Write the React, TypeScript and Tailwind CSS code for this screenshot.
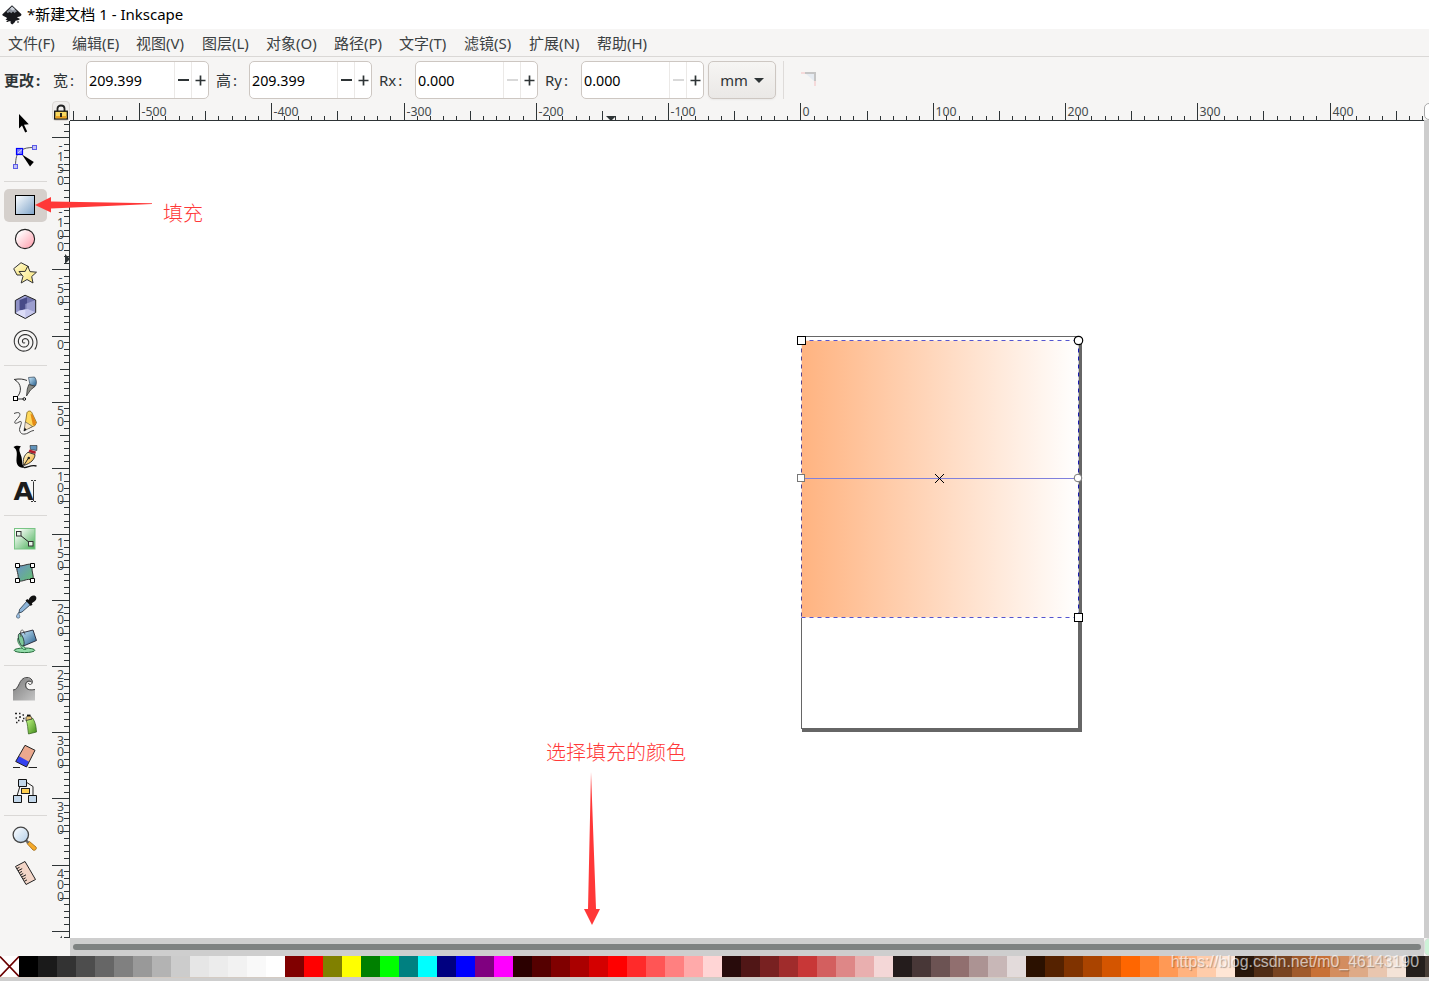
import type { ReactNode } from "react";
import clsx from "clsx";

const menus = [
  { label: "文件(F)", width: "w-16" },
  { label: "编辑(E)", width: "w-16" },
  { label: "视图(V)", width: "w-[66px]" },
  { label: "图层(L)", width: "w-16" },
  { label: "对象(O)", width: "w-[68px]" },
  { label: "路径(P)", width: "w-[65px]" },
  { label: "文字(T)", width: "w-[65px]" },
  { label: "滤镜(S)", width: "w-[65px]" },
  { label: "扩展(N)", width: "w-[68px]" },
  { label: "帮助(H)", width: "w-16" },
];

const palette = (
  "000000 1a1a1a 333333 4d4d4d 666666 808080 999999 b3b3b3 cccccc e6e6e6 ececec f2f2f2 f9f9f9 ffffff " +
  "800000 ff0000 808000 ffff00 008000 00ff00 008080 00ffff 000080 0000ff 800080 ff00ff " +
  "2b0000 550000 800000 aa0000 d40000 ff0000 ff2a2a ff5555 ff8080 ffaaaa ffd5d5 " +
  "280b0b 501616 782121 a02c2c c83737 d35f5f de8787 e9afaf f4d7d7 " +
  "241c1c 483737 6c5353 916f6f ac9393 c8b7b7 e3dbdb " +
  "2b1100 552200 803300 aa4400 d45500 ff6600 ff7f2a ff9955 ffb380 ffccaa ffe6d5 " +
  "28170b 502d16 784421 a05a2c c87137 d38d5f deaa87 e9c6af f4e3d7 241f1c 483e37"
).split(" ");

function spiralPath(cx: number, cy: number, radius: number, end: number) {
  const points: string[] = [];
  for (let t = 1.2; t <= end; t += 0.15) {
    const r = (radius * t) / end;
    points.push(`${(cx + r * Math.cos(t)).toFixed(2)} ${(cy + r * Math.sin(t)).toFixed(2)}`);
  }
  return `M${points.join("L")}`;
}

type Tool = { name: string; icon: ReactNode; active?: boolean };

const toolGroups: Tool[][] = [
  [
    {
      name: "select",
      icon: <path d="M11 8V22.5L14 19.5L17.2 26.5L19.2 25.4L16 18.8L20.8 18.2Z" fill="#000" />,
    },
    {
      name: "node",
      icon: (
        <>
          <path d="M7.5 26C7.5 18 9 13 12 11C16 8 20 7.5 26 7.5" fill="none" stroke="#555" />
          <path d="M14 14.5L25.8 22L22 26.5Z" fill="#000" />
          <rect x="8.5" y="8.5" width="6" height="6" fill="#7f7fff" stroke="#0000ff" strokeWidth="1.2" />
          <path d="M10 13L14 9.5" stroke="#dde" />
          <rect x="24.5" y="5.5" width="4" height="4" fill="#c3c3f5" stroke="#5b5be8" />
          <rect x="5.5" y="24.5" width="4" height="4" fill="#c3c3f5" stroke="#5b5be8" />
        </>
      ),
    },
  ],
  [
    {
      name: "rect",
      active: true,
      icon: <rect x="7.5" y="7.5" width="19" height="19" fill="url(#gBlue)" stroke="#000" />,
    },
    {
      name: "ellipse",
      icon: <circle cx="17" cy="17" r="9.6" fill="url(#gPink)" stroke="#222" strokeWidth="1.1" />,
    },
    {
      name: "star",
      icon: (
        <g stroke="#333" strokeLinejoin="round" fill="url(#gYellow)">
          <path d="M13 6.7L20.5 10.5L20 19L9 19L5.7 12.7Z" />
          <path d="M19.8 10L22 15.6L28.5 16.2L23.7 20.5L25 27L19 23.5L13.2 27L15 20.3L11 15.5L17.2 15.4Z" />
        </g>
      ),
    },
    {
      name: "box",
      icon: (
        <>
          <path d="M17 5.2L27.7 10V22.5L17.3 28.5L7.3 23.3V10.5Z" fill="#a3a5d6" />
          <path d="M17 5.2L7.3 10.5V23.3L11.5 20.5V10Z" fill="#9092c6" />
          <path d="M11.5 10L19.5 7V19L11.5 20.5Z" fill="#484b88" />
          <path d="M19.5 7L27.7 10V22.5L19.5 19Z" fill="#7476b0" />
          <path d="M7.3 23.3L11.5 20.5L19.5 19L27.7 22.5L17.3 28.5Z" fill="#dcdcf7" />
          <path d="M17.3 14L27.7 10V22.5L17.3 28.5Z" fill="#b8b9e4" fillOpacity="0.6" />
          <path d="M17 5.2L27.7 10V22.5L17.3 28.5L7.3 23.3V10.5Z" fill="none" stroke="#222" strokeLinejoin="round" />
        </>
      ),
    },
    {
      name: "spiral",
      icon: <path d={spiralPath(16.6, 17.8, 12.8, 19.5)} fill="none" stroke="#333" strokeWidth="1.1" />,
    },
  ],
  [
    {
      name: "pen",
      icon: (
        <>
          <path d="M6 7.5C12 6.5 15 7 19 8.5M7 8C13 11 15 20 8 26M10 27H15" fill="none" stroke="#333" />
          <path d="M20.5 5.5L26.5 5C28.8 8 29 11 27.5 14L22 13Z" fill="url(#gPenBlue)" stroke="#345" strokeWidth="0.7" />
          <path d="M20.8 12.5L27 14.3L22.5 18L18.5 24L19.3 17Z" fill="#8c8c85" stroke="#333" strokeWidth="0.8" />
          <rect x="5.5" y="24.5" width="4" height="4" fill="#fff" stroke="#000" />
          <circle cx="16.3" cy="27" r="1.3" fill="#fff" stroke="#000" />
        </>
      ),
    },
    {
      name: "pencil",
      icon: (
        <>
          <path
            d="M6 7.5C12 5 14 8 9.5 12.5C4.5 17.5 7 18.5 11 16C16 13.5 11.5 21 11.5 23.5C12 28.5 16 29 20 27C23 25 25 24.5 26 24.5"
            fill="none"
            stroke="#444"
          />
          <path d="M19 6.5C20.5 4.5 23 4.5 24 7L28.5 16.5L27 19.5L20.5 22.5L17.5 16Z" fill="#ffd95c" stroke="#6a5010" strokeWidth="0.7" />
          <path d="M22.5 8L24.5 8.5L28.2 16.5L26.8 19.5L24.8 19Z" fill="#e58a16" />
          <path d="M17.3 16L20 17.5L24.5 20.5L16 25Z" fill="#f6e3c4" stroke="#444" strokeWidth="0.6" />
          <path d="M16.6 21.5L18.6 23.7L15.7 25.3Z" fill="#111" />
        </>
      ),
    },
    {
      name: "calligraphy",
      icon: (
        <>
          <path d="M5.5 7C8 5 11 5.5 13 6.5C9.5 9 12.5 13 13.5 17C14.5 22 13.5 25 17 27.5C11 29 8 24.5 8.5 19C9 13.5 9.5 10 5.5 7Z" fill="#000" />
          <path d="M16 27.5C20 28 22 24.5 28.5 26" fill="none" stroke="#111" strokeWidth="1.3" />
          <path d="M22 5.5L29 5.5L28.8 10.5L22.5 9.5Z" fill="#6193bb" stroke="#222" strokeWidth="0.6" />
          <path d="M21.5 9.5L28 11.5L27.3 14L20.5 12Z" fill="#b31c2b" />
          <path d="M20 12.3L27 14.5C27 19 23 23.5 15.5 25.5C14.5 20 16 15 20 12.3Z" fill="url(#gGold)" stroke="#222" strokeWidth="0.9" />
          <path d="M16 25L20.5 18" stroke="#222" />
          <circle cx="20.8" cy="18" r="1.2" fill="#222" />
        </>
      ),
    },
    {
      name: "text",
      icon: (
        <>
          <text
            x="5.5"
            y="25.5"
            fontSize="24"
            fontWeight="900"
            fontFamily="'DejaVu Sans', sans-serif"
            textLength="20"
            lengthAdjust="spacingAndGlyphs"
            fill="#1c1c1c"
          >
            A
          </text>
          <path d="M25.5 7.5V27M23 6.5H25M26 6.5H28M23 27.5H25M26 27.5H28" stroke="#333" fill="none" />
        </>
      ),
    },
  ],
  [
    {
      name: "gradient",
      icon: (
        <>
          <rect x="6.5" y="6.5" width="20.5" height="20.5" fill="url(#gGreen)" stroke="#79c585" />
          <path d="M12 13L22 21" stroke="#222" />
          <rect x="8.5" y="9.5" width="4.5" height="4.5" fill="#e6f4e8" stroke="#333" />
          <rect x="20.5" y="19.5" width="4.5" height="4.5" fill="#e6f4e8" stroke="#333" />
        </>
      ),
    },
    {
      name: "mesh",
      icon: (
        <>
          <path d="M9.5 9C14 12 20 6 25 9C22 14 27 20 24.5 24.5C19 21 15 27 9.5 24.5C12 19 7 14 9.5 9Z" fill="url(#gMesh)" stroke="#333" />
          <path
            d="M7.5 7.5h4v4h-4zM22.5 7.5h4v4h-4zM7.5 22.5h4v4h-4zM22.5 22.5h4v4h-4z"
            fill="#fff"
            stroke="#000"
          />
        </>
      ),
    },
    {
      name: "dropper",
      icon: (
        <>
          <path d="M19 11L22.5 14.5L14 22L11 23L11.5 19.5Z" fill="#8db4d8" stroke="#234" strokeWidth="0.8" />
          <path
            d="M17.5 10.5L19.3 9L20.5 10C21.5 7 24 5 26.5 5.5C29 6.5 28.8 9.5 27 11L23.8 13.3L24.5 14.5L22.8 16Z"
            fill="#111"
          />
          <path d="M10.5 22.5C9 25 8.3 25.5 8.5 27C8.8 28.7 12 28.6 11.8 26.5C11.7 25 10.8 24.5 10.5 22.5Z" fill="#9cc1e5" stroke="#345" strokeWidth="0.6" />
        </>
      ),
    },
    {
      name: "bucket",
      icon: (
        <>
          <ellipse cx="16.5" cy="26.3" rx="10.3" ry="2.3" fill="#91dba8" stroke="#276b3c" />
          <path d="M10 14C8.5 17 11 21 15.5 25.5H18C15.5 22 14 20 13 16Z" fill="#8fdba4" stroke="#276b3c" strokeWidth="0.7" />
          <path d="M11.5 9.5L25 6L28.5 16.5L15.5 22Z" fill="url(#gPenBlue)" stroke="#223" strokeWidth="0.9" />
          <ellipse cx="13.2" cy="15.8" rx="2.4" ry="6.5" transform="rotate(-16 13.2 15.8)" fill="#7fca9a" stroke="#233" strokeWidth="0.8" />
          <path d="M13 13C11 5 15.5 3.5 17 10.5" fill="none" stroke="#444" strokeWidth="0.8" />
        </>
      ),
    },
  ],
  [
    {
      name: "tweak",
      icon: (
        <>
          <path
            d="M5 18C12 18 10 6 19 6C24 6 25.5 10 24 11C21 8.5 18.5 10.5 18.5 13C18.5 17 21 18.5 27 18V28.5H5Z"
            fill="url(#gGray)"
          />
          <path
            d="M5 18C12 18 10 5.5 19 5.5C24 5.5 25.5 10 23.5 12C22.5 13 20.5 12.5 20.5 11M23.5 10C20 7.5 17 10.5 17.5 13.5C18 17.5 21 18.5 27 17.5"
            fill="none"
            stroke="#444"
          />
        </>
      ),
    },
    {
      name: "spray",
      icon: (
        <>
          <path
            d="M7 7.5h2M11 7.5h1.5M14.5 9h1.5M7.5 12h1.5M11 11h2M15 12.5h1.5M10 14.5h1.5M14 15h1.5M8 16.5h1.5"
            stroke="#222"
            strokeWidth="1.6"
          />
          <path d="M18 14L25 12.5C26.5 15.5 28 18 28.5 26L20.5 28C19.5 23 20 18 18 14Z" fill="url(#gSpray)" stroke="#2e5c17" strokeWidth="0.7" />
          <path d="M18 11.5C19 9.5 22 9 23.5 11L24 13L18 14.5Z" fill="#e2c074" stroke="#333" strokeWidth="0.8" />
          <path d="M19 9.5H22.5" stroke="#111" strokeWidth="1.8" />
        </>
      ),
    },
    {
      name: "eraser",
      icon: (
        <>
          <path d="M17 5.3L27 10.3L18.5 27L7.7 21.5Z" fill="#eca98e" />
          <path d="M10.7 16L21 21.7L18.5 27L7.7 21.5Z" fill="#3442f0" />
          <path d="M17 5.3L27 10.3L18.5 27L7.7 21.5Z" fill="none" stroke="#222" strokeLinejoin="round" />
          <path d="M5 27.5H12M20.5 27.5H29" stroke="#222" />
        </>
      ),
    },
    {
      name: "connector",
      icon: (
        <>
          <path d="M12 12L9 22M18 8L25 12.5V22" fill="none" stroke="#222" />
          <path d="M10.5 5.5h8v7h-8zM5.5 21.5h8v7h-8zM20.5 21.5h8v7h-8z" fill="#c3d7ea" stroke="#111" />
          <rect x="13.5" y="14.5" width="8" height="5" fill="#ffce4f" stroke="#222" />
        </>
      ),
    },
  ],
  [
    {
      name: "zoom",
      icon: (
        <>
          <path d="M19 21.5L21.5 19.5L28 25C29.3 26.5 27 29.3 25 28Z" fill="#f5aa2a" stroke="#9c6510" strokeWidth="0.8" strokeLinejoin="round" />
          <path d="M17.5 18L20.5 20.8" stroke="#666" strokeWidth="2.5" />
          <circle cx="12.8" cy="12.8" r="7.7" fill="url(#gLens)" stroke="#444" strokeWidth="1.3" />
        </>
      ),
    },
    {
      name: "measure",
      icon: (
        <>
          <path d="M7.5 10.5L17 5.5L27.5 23.5L18 28.5Z" fill="#f3d5c7" stroke="#222" strokeLinejoin="round" />
          <path
            d="M8.8 12.7L11.5 11.3M10 14.8L14.2 12.6M11.2 16.9L14 15.4M12.4 19L15.2 17.5M13.7 21.1L18 18.8M15 23.2L17.6 21.8M16.3 25.3L19 23.9"
            stroke="#222"
          />
        </>
      ),
    },
  ],
];

function Gradient({ id, from, to }: { id: string; from: string; to: string }) {
  return (
    <linearGradient id={id} x1="0" y1="0" x2="1" y2="1">
      <stop offset="0.15" stopColor={from} />
      <stop offset="1" stopColor={to} />
    </linearGradient>
  );
}

function GradientDefs() {
  return (
    <svg className="absolute size-0">
      <defs>
        <Gradient id="gBlue" from="#eaf1f8" to="#7ea3c8" />
        <Gradient id="gPink" from="#ffffff" to="#ff99a8" />
        <Gradient id="gYellow" from="#fffad0" to="#f7e068" />
        <Gradient id="gPenBlue" from="#b7d9ef" to="#225a88" />
        <Gradient id="gGold" from="#fff2c0" to="#eda11f" />
        <Gradient id="gGreen" from="#f5fbf5" to="#46ae55" />
        <Gradient id="gMesh" from="#6a97bd" to="#65c06f" />
        <Gradient id="gGray" from="#888888" to="#c4c4c4" />
        <Gradient id="gSpray" from="#b4ec78" to="#3f8a18" />
        <Gradient id="gLens" from="#f3f8fd" to="#b4cfe8" />
      </defs>
    </svg>
  );
}

function TitleBar() {
  return (
    <div className="flex h-[29px] shrink-0 items-center gap-[5px] bg-white pl-0.5 text-[15px] text-black">
      <svg className="h-5 w-5" viewBox="0 0 20 20">
        <path
          d="M10 0.3L19 8.8C20.5 10.3 18 11.5 15.5 12C14 12.5 16.5 13.2 18 14C17 15.5 14.5 15 13.5 15.8C13 17 12 18.5 10.3 19.5C8.5 18.8 8 17.5 9 16.5C6.5 16.5 4.5 15.5 3.5 14C6 13.5 5 12.5 2.5 11.5C0 10.5 -0.2 9.8 1 8.8Z"
          fill="#17181c"
        />
        <path d="M10 1.5L15 6.2L12.5 8L11 6.5L9.3 8.3L7.8 7L5.7 8L4.5 6.8Z" fill="#8f959f" />
        <path d="M10 1.5L13 4.2L11 5.5L8 4Z" fill="#cdd2da" />
        <path d="M4.5 16.5H6.5M15 17H17" stroke="#222" />
      </svg>
      <span className="whitespace-pre">*新建文档 1 - Inkscape</span>
    </div>
  );
}

function SpinBox({ value, atMinimum }: { value: string; atMinimum?: boolean }) {
  return (
    <div className="flex h-[38px] w-[123px] shrink-0 overflow-hidden rounded-[5px] border border-[#cdc7c2] bg-white">
      <span className="flex flex-1 items-center pt-0.5 pl-0.5 text-[14.3px] text-black">{value}</span>
      <div className="flex w-[17px] items-center justify-center border-l border-[#ebe9e7]">
        <span className={clsx("h-[1.5px] w-[11px]", atMinimum ? "bg-[#d9d9d9]" : "bg-[#2e3436]")} />
      </div>
      <div className="flex w-[17px] items-center border-l border-[#ebe9e7] pl-[2.5px]">
        <svg className="h-[11px] w-[11px]" viewBox="0 0 11 11">
          <path d="M0.5 5.5H10.5M5.5 0.5V10.5" stroke="#2e3436" strokeWidth="1.7" />
        </svg>
      </div>
    </div>
  );
}

function ControlBar() {
  return (
    <div className="flex h-[45px] shrink-0 items-start border-t border-[#dad8d6] pt-1 pl-1 text-[15px] text-[#2e3436]">
      <span className="flex h-[38px] w-[49px] items-center gap-0.5 font-bold">更改<span>:</span></span>
      <span className="flex h-[38px] w-[33px] items-center gap-0.5">宽<span>:</span></span>
      <SpinBox value="209.399" />
      <span className="ml-[7px] flex h-[38px] w-[33px] items-center gap-0.5">高<span>:</span></span>
      <SpinBox value="209.399" />
      <span className="ml-[7px] flex h-[38px] w-9 items-center gap-0.5">Rx<span>:</span></span>
      <SpinBox value="0.000" atMinimum />
      <span className="ml-[7px] flex h-[38px] w-9 items-center gap-0.5">Ry<span>:</span></span>
      <SpinBox value="0.000" atMinimum />
      <button className="ml-1 flex h-[38px] w-[68px] items-center justify-center gap-1.5 rounded-[5px] border border-[#cdc7c2] bg-linear-to-b from-[#f6f5f3] to-[#eae8e6] pt-px text-[14.8px] shadow-xs">
        mm
        <svg className="h-[5px] w-2.5" viewBox="0 0 10 5">
          <path d="M0 0H10L5 5Z" fill="#2e3436" />
        </svg>
      </button>
      <div className="ml-[7px] h-[38px] w-px bg-[#dedbd9]" />
      <svg className="mt-[11px] ml-[17px] h-[14px] w-[15px]" viewBox="0 0 15 14">
        <path d="M5 2H13V9Z" fill="#e6ebf1" />
        <path d="M0 1H5M14 8V14" stroke="#f5dada" strokeWidth="2" />
        <path d="M4 1H14V9" fill="none" stroke="#c5c5c5" strokeWidth="2" />
      </svg>
    </div>
  );
}

function ToolBox() {
  return (
    <div className="flex w-[52px] shrink-0 flex-col pt-[5px]">
      {toolGroups.map((group, index) => (
        <div key={index}>
          {index > 0 && (
            <div className="flex h-3.5 items-center">
              <div className="ml-1 h-px w-[43px] bg-[#dad8d6]" />
            </div>
          )}
          {group.map((tool) => (
            <div key={tool.name} className="flex h-[34px] items-center">
              <div
                className={clsx(
                  "ml-1 flex h-[33px] w-[43px] items-center rounded-[5px] pl-1",
                  tool.active && "bg-[#d5d0cc]"
                )}
              >
                <svg className="h-[34px] w-[34px] shrink-0" viewBox="0 0 34 34">
                  {tool.icon}
                </svg>
              </div>
            </div>
          ))}
        </div>
      ))}
    </div>
  );
}

function range(from: number, to: number, step: number) {
  const values: number[] = [];
  for (let v = from; v <= to; v += step) values.push(v);
  return values;
}

function HorizontalRuler() {
  const toX = (v: number) => Math.floor(800.9 + v * 1.3229) - 70;

  return (
    <svg className="h-5 w-[1354px] shrink-0" viewBox="0 0 1354 20" fontSize="12.3" fill="#454a4c">
      {range(-550, 470, 10).map((v) => {
        const height = v % 100 === 0 ? 18 : v % 50 === 0 ? 10 : 5;
        return <rect key={v} x={toX(v)} y={20 - height} width="1" height={height} fill="#2e3436" />;
      })}
      {range(-500, 400, 100).map((v) => (
        <text key={v} x={toX(v) + 2.5} y="15">
          {v}
        </text>
      ))}
      <rect y="19" width="1354" height="1" fill="#2e3436" />
      <path d="M536 15H546L541 20Z" fill="#2e3436" />
    </svg>
  );
}

function VerticalRuler() {
  const toY = (v: number) => Math.floor(336 + v * 1.3225) - 121;

  return (
    <svg className="h-[817px] w-[18px] shrink-0" viewBox="0 0 18 817" fontSize="12.3" fill="#454a4c">
      {range(-160, 455, 5).map((v) => {
        const width = v % 50 === 0 ? 18 : v % 25 === 0 ? 10 : 6;
        return <rect key={v} x={18 - width} y={toY(v)} width={width} height="1" fill="#2e3436" />;
      })}
      {range(-150, 400, 50).map((v) =>
        String(v)
          .split("")
          .map((char, i) => (
            <text key={`${v}-${i}`} x="8.5" y={toY(v) + 12.7 + i * 11.6} textAnchor="middle">
              {char}
            </text>
          ))
      )}
      {/* the 450 label runs out of the ruler, only the tip of the 4 shows */}
      <path d="M8 817L10 814.5V817Z" />
      <rect x="17" width="1" height="817" fill="#2e3436" />
      <path d="M13 133V143L18 138Z" fill="#2e3436" />
    </svg>
  );
}

function LockButton() {
  return (
    <div className="flex h-5 w-[18px] shrink-0 items-center justify-center rounded-[4px] border border-[#dcd8d5] bg-[#f0eeec] pt-0.5">
      <svg className="h-4 w-[14px] shrink-0" viewBox="0 0 14 16">
        <path d="M3.5 8V4.5C3.5 0.5 10.5 0.5 10.5 4.5V8" fill="none" stroke="#222" strokeWidth="1.8" />
        <rect x="0.7" y="7.2" width="12.6" height="7.8" fill="#f8d860" stroke="#111" strokeWidth="1.3" />
        <path d="M1.5 12H12.5V14.3H1.5Z" fill="#e9a224" />
        <path d="M7 9V13" stroke="#111" strokeWidth="1.8" />
      </svg>
    </div>
  );
}

function Canvas() {
  return (
    <svg className="h-[817px] w-[1354px] shrink-0 bg-white" viewBox="70 121 1354 817">
      <defs>
        <linearGradient id="gFill">
          <stop offset="0" stopColor="#ffb380" />
          <stop offset="1" stopColor="#ffb380" stopOpacity="0" />
        </linearGradient>
      </defs>

      {/* page and its shadow */}
      <path d="M1078 340H1082V732H802V728H1078Z" fill="#666" />
      <rect x="801.5" y="336.5" width="277" height="392" fill="#fff" stroke="#666" />

      <rect x="801" y="340" width="278" height="278" fill="url(#gFill)" />
      <rect x="801.5" y="340.5" width="277" height="277" fill="none" stroke="#fff" strokeOpacity="0.7" />
      <path d="M801.5 340.5H1078.5M801.5 617.5H1078.5" stroke="#5555cf" strokeDasharray="4 4" />
      <path d="M801.5 340.5V617.5" stroke="#57448f" strokeDasharray="4 4" />
      <path d="M1078.5 340.5V617.5" stroke="#1a1aae" strokeDasharray="4 4" />

      <path d="M801 478.5H1078" stroke="#8080dc" />
      <path d="M935 474L944 483M944 474L935 483" stroke="#000" />

      <g fill="#fff">
        <rect x="797.5" y="336.5" width="8" height="8" stroke="#000" />
        <rect x="1074.5" y="613.5" width="8" height="8" stroke="#000" />
        <circle cx="1078.5" cy="340.5" r="4.2" stroke="#000" strokeWidth="1.2" />
        <rect x="797.5" y="474.5" width="7" height="7" stroke="#777" />
        <circle cx="1078" cy="478" r="3.8" stroke="#777" />
      </g>
    </svg>
  );
}

function Palette() {
  return (
    <div className="relative flex h-[21px] shrink-0">
      <svg className="h-[21px] w-[19px] shrink-0 bg-white" viewBox="0 0 19 21">
        <path d="M0 0.5L19 20.5M19 0.5L0 20.5" stroke="#6b0000" strokeWidth="1.6" />
      </svg>
      <div className="flex flex-1 overflow-hidden">
        {palette.map((color, i) => (
          <div key={i} className="h-full w-[19px] shrink-0" style={{ backgroundColor: `#${color}` }} />
        ))}
      </div>
      <span className="absolute -top-[6px] right-[10px] font-['Liberation_Sans',sans-serif] text-[15.9px] text-white/65 [text-shadow:1px_1px_1px_rgba(0,0,0,0.3)]">
        https://blog.csdn.net/m0_46143190
      </span>
    </div>
  );
}

function Annotations() {
  return (
    <div className="pointer-events-none absolute inset-0 font-['Noto_Sans_CJK_SC',sans-serif] text-[20px] leading-6 font-light text-[#ff3838]">
      <svg className="absolute inset-0 h-full w-full" viewBox="0 0 1429 981">
        <path d="M35 205L51 197V201.5L152 203.3V204L51 208.5V212.5Z" fill="#ff3838" />
        <path d="M591 772L596 909H600L592 925L584 909H588Z" fill="#ff3838" />
      </svg>
      <span className="absolute top-[201px] left-[163px]">填充</span>
      <span className="absolute top-[740px] left-[546px]">选择填充的颜色</span>
    </div>
  );
}

export default function App() {
  return (
    <div className="relative flex h-[981px] w-[1429px] flex-col overflow-hidden bg-[#f6f5f4] font-['Noto_Sans','Noto_Sans_CJK_SC',sans-serif]">
      <GradientDefs />
      <TitleBar />
      <nav className="flex h-[27px] shrink-0 items-center pt-0.5 pl-2 text-[15px] text-[#3c4143]">
        {menus.map((menu) => (
          <span key={menu.label} className={clsx("shrink-0 whitespace-nowrap", menu.width)}>
            {menu.label}
          </span>
        ))}
      </nav>
      <ControlBar />

      <div className="flex h-[855px] shrink-0">
        <ToolBox />
        <div className="flex w-[18px] shrink-0 flex-col">
          <LockButton />
          <VerticalRuler />
        </div>
        <div className="flex w-[1354px] shrink-0 flex-col">
          <HorizontalRuler />
          <Canvas />
          <div className="flex h-[18px] items-center bg-[#cecece] px-[3px]">
            <div className="h-1.5 w-full rounded-full bg-[#7e8281]" />
          </div>
        </div>
        <div className="flex w-[5px] shrink-0 flex-col overflow-hidden">
          <div className="mt-0.5 h-[17px] w-4 shrink-0 rounded-[5px] border border-[#aaa] bg-white" />
          <div className="h-[818px] shrink-0 bg-[#cdcdcd]" />
          <div className="h-[18px] w-4 shrink-0 rounded-[5px] border border-[#ddd] bg-[#cdf3d8]" />
        </div>
      </div>

      <Palette />
      <div className="h-1 shrink-0 border-t border-[#d4cbc3] bg-[#cecece]" />
      <Annotations />
    </div>
  );
}
